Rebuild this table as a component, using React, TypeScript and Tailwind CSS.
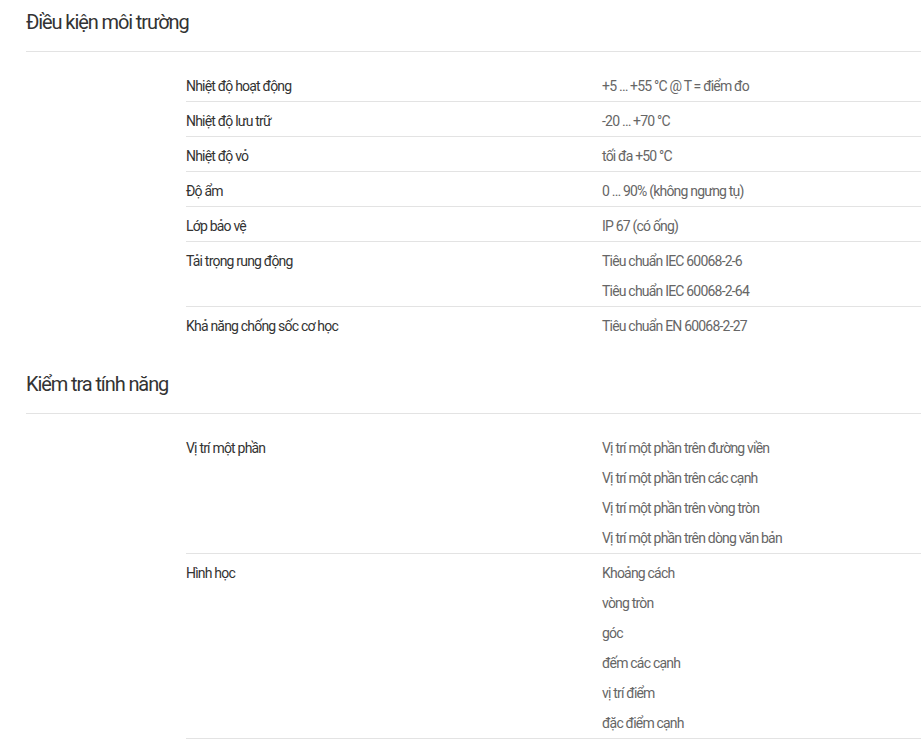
const sections = [
  {
    title: "Điều kiện môi trường",
    rows: [
      { label: "Nhiệt độ hoạt động", values: ["+5 … +55 °C @ T = điểm đo"] },
      { label: "Nhiệt độ lưu trữ", values: ["-20 … +70 °C"] },
      { label: "Nhiệt độ vỏ", values: ["tối đa +50 °C"] },
      { label: "Độ ẩm", values: ["0 … 90% (không ngưng tụ)"] },
      { label: "Lớp bảo vệ", values: ["IP 67 (có ống)"] },
      { label: "Tải trọng rung động", values: ["Tiêu chuẩn IEC 60068-2-6", "Tiêu chuẩn IEC 60068-2-64"] },
      { label: "Khả năng chống sốc cơ học", values: ["Tiêu chuẩn EN 60068-2-27"] },
    ],
  },
  {
    title: "Kiểm tra tính năng",
    rows: [
      {
        label: "Vị trí một phần",
        values: [
          "Vị trí một phần trên đường viền",
          "Vị trí một phần trên các cạnh",
          "Vị trí một phần trên vòng tròn",
          "Vị trí một phần trên dòng văn bản",
        ],
      },
      {
        label: "Hình học",
        values: ["Khoảng cách", "vòng tròn", "góc", "đếm các cạnh", "vị trí điểm", "đặc điểm cạnh"],
      },
    ],
  },
];

export default function App() {
  return (
    <div className="min-h-screen bg-white pl-[26px] font-['Roboto',sans-serif] overflow-hidden">
      {sections.map((s, si) => (
        <section key={s.title} className={si > 0 ? "mt-[21px]" : ""}>
          <h2 className="h-[52px] border-b border-[#e3e3e3] pt-[9px] text-[20px] leading-[26px] tracking-[-1.1px] text-[#333]">
            {s.title}
          </h2>
          <div className="ml-[160px] pt-[15px]">
            {s.rows.map((r, ri) => (
              <div
                key={r.label}
                className={
                  "flex pt-[4px] text-[14px] tracking-[-0.8px] " +
                  (si === 0 && ri === s.rows.length - 1 ? "" : "border-b border-[#e3e3e3]")
                }
              >
                <div className="w-[416px] leading-[30px] text-[#333]">{r.label}</div>
                <div className="flex-1">
                  {r.values.map((v) => (
                    <div key={v} className="leading-[30px] text-[#666]">
                      {v}
                    </div>
                  ))}
                </div>
              </div>
            ))}
          </div>
        </section>
      ))}
    </div>
  );
}
